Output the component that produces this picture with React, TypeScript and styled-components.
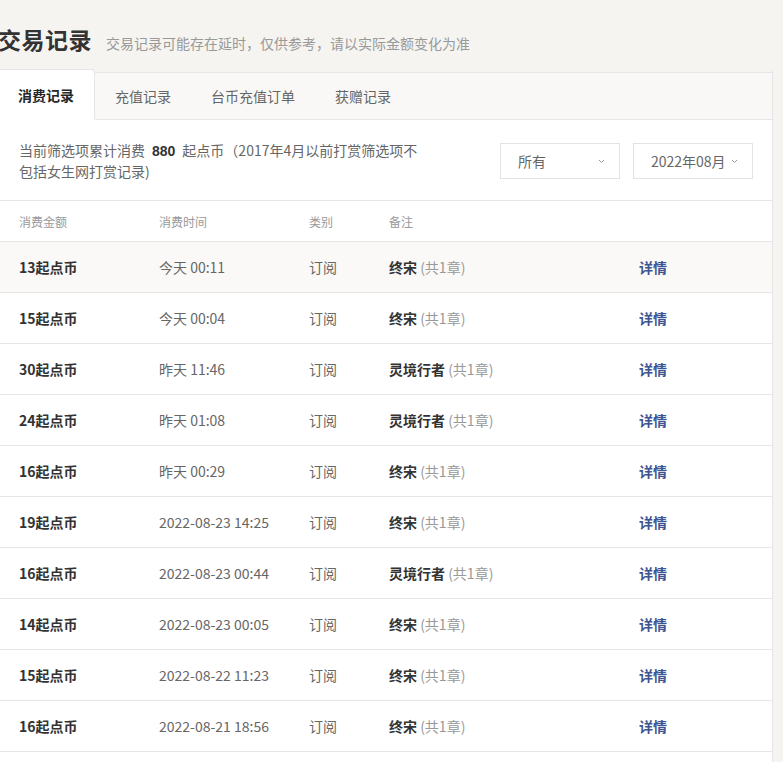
import styled, { createGlobalStyle } from 'styled-components';

const GlobalStyle = createGlobalStyle`
  * {
    box-sizing: border-box;
  }
  body {
    margin: 0;
    background: #f5f4f1;
    font-family: 'Liberation Sans', 'Noto Sans CJK SC', sans-serif;
    color: #333;
  }
`;

const tabs = ['消费记录', '充值记录', '台币充值订单', '获赠记录'];

const records = [
  { amount: 13, time: '今天 00:11', book: '终宋' },
  { amount: 15, time: '今天 00:04', book: '终宋' },
  { amount: 30, time: '昨天 11:46', book: '灵境行者' },
  { amount: 24, time: '昨天 01:08', book: '灵境行者' },
  { amount: 16, time: '昨天 00:29', book: '终宋' },
  { amount: 19, time: '2022-08-23 14:25', book: '终宋' },
  { amount: 16, time: '2022-08-23 00:44', book: '灵境行者' },
  { amount: 14, time: '2022-08-23 00:05', book: '终宋' },
  { amount: 15, time: '2022-08-22 11:23', book: '终宋' },
  { amount: 16, time: '2022-08-21 18:56', book: '终宋' },
  { amount: 18, time: '2022-08-21 10:02', book: '终宋' },
];

function Chevron() {
  return (
    <svg width="7" height="5" viewBox="0 0 7 5">
      <polyline points="1,1 3.5,3.5 6,1" fill="none" stroke="#999" strokeWidth="1" />
    </svg>
  );
}

function App() {
  return (
    <Page>
      <GlobalStyle />
      <TitleRow>
        <Title>交易记录</Title>
        <SubTitle>交易记录可能存在延时，仅供参考，请以实际金额变化为准</SubTitle>
      </TitleRow>
      <Panel>
        <TabBar>
          {tabs.map((t, i) => (
            <Tab key={t} active={i === 0}>
              {t}
            </Tab>
          ))}
          <TabFill />
        </TabBar>
        <Summary>
          <SummaryText>
            当前筛选项累计消费<Total>880</Total>起点币（2017年4月以前打赏筛选项不包括女生网打赏记录)
          </SummaryText>
          <Selects>
            <Select>
              所有
              <Chevron />
            </Select>
            <Select>
              2022年08月
              <Chevron />
            </Select>
          </Selects>
        </Summary>
        <HeadRow>
          <span>消费金额</span>
          <span>消费时间</span>
          <span>类别</span>
          <span>备注</span>
          <span />
        </HeadRow>
        {records.map((r, i) => (
          <Row key={i} highlight={i === 0}>
            <Amount>{r.amount}起点币</Amount>
            <Cell>{r.time}</Cell>
            <Cell>订阅</Cell>
            <Cell>
              <Book>{r.book}</Book> <Chapters>(共1章)</Chapters>
            </Cell>
            <Detail>详情</Detail>
          </Row>
        ))}
      </Panel>
    </Page>
  );
}

const Page = styled.div`
  width: 775px;
  margin-left: -2px;
`;

const TitleRow = styled.div`
  display: flex;
  align-items: baseline;
  height: 70px;
  padding-top: 23px;
`;

const Title = styled.h1`
  margin: 0;
  font-family: 'Noto Sans CJK SC', sans-serif;
  font-size: 23px;
  font-weight: 700;
  line-height: 32px;
  color: #333;
  letter-spacing: 0.5px;
`;

const SubTitle = styled.span`
  margin-left: 14px;
  font-size: 14px;
  color: #999;
  font-family: 'Noto Sans CJK SC', sans-serif;
`;

const Panel = styled.div`
  background: #fff;
  border-right: 1px solid #e6e6e6;
`;

const TabBar = styled.div`
  display: flex;
  height: 50px;
  background: #f5f4f1;
  font-family: 'Noto Sans CJK SC', sans-serif;
`;

const Tab = styled.div<{ active: boolean }>`
  display: flex;
  align-items: center;
  padding: 0 20px;
  font-size: 14px;
  color: ${({ active }) => (active ? '#262626' : '#666')};
  font-weight: ${({ active }) => (active ? 700 : 400)};
  background: ${({ active }) => (active ? '#fff' : '#f9f8f6')};
  border-top: 1px solid #e6e6e6;
  border-bottom: ${({ active }) => (active ? '1px solid #fff' : '1px solid #e6e6e6')};
  border-right: ${({ active }) => (active ? '1px solid #e6e6e6' : 'none')};
  border-top-right-radius: ${({ active }) => (active ? '4px' : '0')};
  margin-top: ${({ active }) => (active ? '-1px' : '2px')};
  height: ${({ active }) => (active ? '51px' : '48px')};
`;

const TabFill = styled.div`
  flex: 1;
  margin-top: 2px;
  background: #f9f8f6;
  border-top: 1px solid #e6e6e6;
  border-bottom: 1px solid #e6e6e6;
`;

const Summary = styled.div`
  display: flex;
  justify-content: space-between;
  align-items: flex-start;
  height: 81px;
  padding: 20px 20px 0 21px;
  border-bottom: 1px solid #e6e6e6;
`;

const SummaryText = styled.p`
  margin: 0;
  width: 400px;
  font-size: 14px;
  line-height: 20px;
  color: #666;
  font-family: 'Noto Sans CJK SC', sans-serif;
`;

const Total = styled.b`
  color: #333;
  margin: 0 7px;
  font-family: 'Liberation Sans', sans-serif;
`;

const Selects = styled.div`
  display: flex;
  gap: 13px;
  margin-top: 3px;
  margin-right: -1px;
`;

const Select = styled.div`
  display: flex;
  align-items: center;
  justify-content: space-between;
  width: 120px;
  height: 36px;
  padding: 0 14px 0 17px;
  border: 1px solid #e3e3e3;
  font-size: 14px;
  color: #666;
  font-family: 'Noto Sans CJK SC', sans-serif;
`;

const grid = `
  display: grid;
  grid-template-columns: 140px 150px 80px 250px 1fr;
  align-items: center;
  padding-left: 21px;
  border-bottom: 1px solid #e6e6e6;
  font-family: 'Noto Sans CJK SC', sans-serif;
`;

const HeadRow = styled.div`
  ${grid}
  height: 41px;
  font-size: 12px;
  color: #999;
`;

const Row = styled.div<{ highlight: boolean }>`
  ${grid}
  height: 51px;
  font-size: 14px;
  color: #666;
  background: ${({ highlight }) => (highlight ? '#faf9f7' : '#fff')};
`;

const Amount = styled.span`
  font-weight: 700;
  color: #333;
`;

const Cell = styled.span``;

const Book = styled.span`
  font-weight: 700;
  color: #333;
`;

const Chapters = styled.span`
  color: #999;
`;

const Detail = styled.span`
  font-weight: 700;
  color: #3e5592;
`;

export default App;
